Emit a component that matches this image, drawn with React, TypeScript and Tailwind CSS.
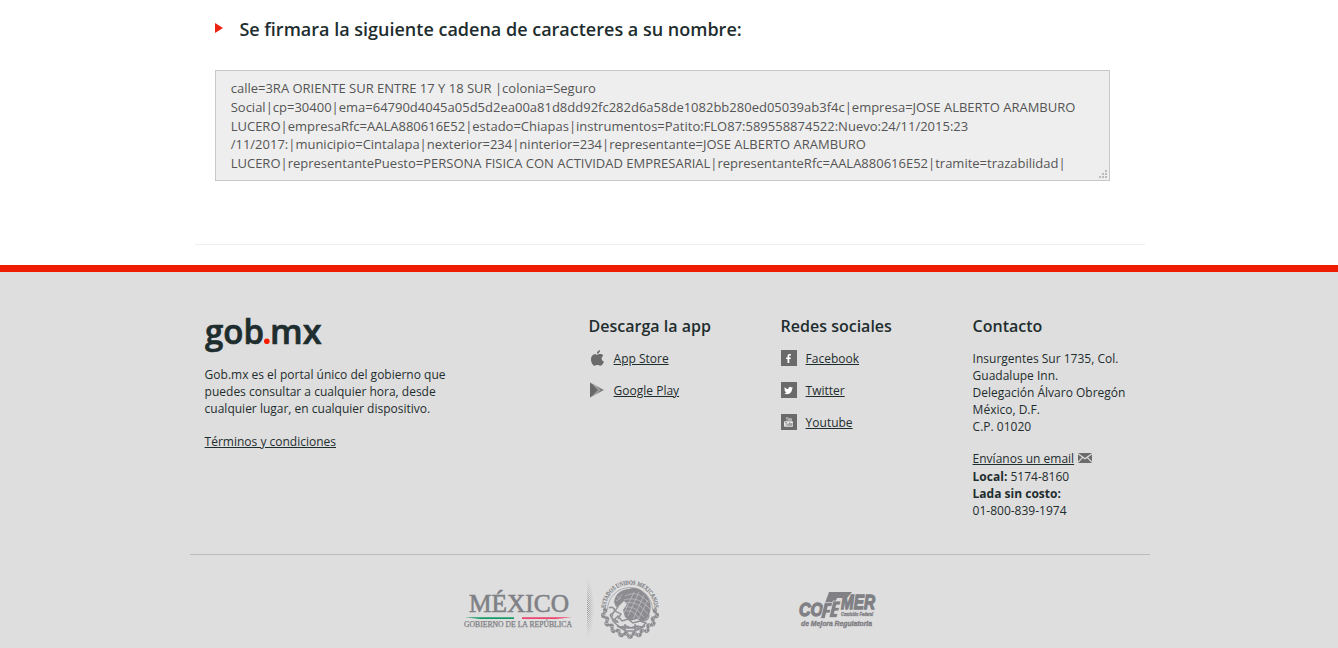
import React from "react";
import { FaFacebookF, FaTwitter } from "react-icons/fa";

const cadena = [
  "calle=3RA ORIENTE SUR ENTRE 17 Y 18 SUR |colonia=Seguro",
  "Social|cp=30400|ema=64790d4045a05d5d2ea00a81d8dd92fc282d6a58de1082bb280ed05039ab3f4c|empresa=JOSE ALBERTO ARAMBURO",
  "LUCERO|empresaRfc=AALA880616E52|estado=Chiapas|instrumentos=Patito:FLO87:589558874522:Nuevo:24/11/2015:23",
  "/11/2017:|municipio=Cintalapa|nexterior=234|ninterior=234|representante=JOSE ALBERTO ARAMBURO",
  "LUCERO|representantePuesto=PERSONA FISICA CON ACTIVIDAD EMPRESARIAL|representanteRfc=AALA880616E52|tramite=trazabilidad|",
];

function GobLogo() {
  return (
    <svg className="block h-[40px] w-[120px] overflow-visible" viewBox="0 0 120 40" aria-label="gob.mx">
      <g className="font-['Open_Sans',sans-serif] font-semibold" fill="#1e2d2e" stroke="#1e2d2e" strokeWidth=".7">
        <text x="0" y="26.500" fontSize="34" textLength="59" lengthAdjust="spacingAndGlyphs">gob</text>
        <text x="65" y="26.500" fontSize="34" textLength="51.500" lengthAdjust="spacingAndGlyphs">mx</text>
      </g>
      <circle cx="61.800" cy="24.200" r="2.800" fill="#f91d00" />
    </svg>
  );
}

function AppleIcon() {
  return (
    <svg className="block h-4 w-4" viewBox="0 0 16 16" fill="#6a6a6a">
      <path d="M11 0c.2 2-1.400 3.700-3.100 3.700C7.700 2 9.300.3 11 0z" />
      <path d="M8.200 4.800c.8 0 1.800-.8 3.300-.7 1.200 0 2.300.6 2.900 1.500-2.600 1.700-2.100 5 .5 6.100-.7 1.800-2.100 4-3.700 4-1 0-1.500-.6-2.800-.6s-1.700.6-2.700.6C3.900 15.700 2 12.400 2 9.400c0-3.400 2.200-5.200 4.100-5.200.9 0 1.600.6 2.100.6z" />
    </svg>
  );
}

function PlayIcon() {
  return (
    <svg className="block h-4 w-4" viewBox="0 0 16 16">
      <path d="M1 .5v15L15 8z" fill="#808080" />
      <path d="M1 .5v15l7-7.500z" fill="#686868" />
      <path d="m5.500 3 5 5-5 5" fill="none" stroke="#c5c5c5" strokeWidth=".9" />
    </svg>
  );
}

function YoutubeIcon() {
  return (
    <svg className="h-[10px] w-[9px]" viewBox="0 0 9 10">
      <path d="m2 0 1 2v2M4 0 3 2M4.500 1.500h1v2h-1zM6.500 1.300v2.200h1V1.300" fill="none" stroke="#e5e5e5" strokeWidth=".6" />
      <rect y="4.300" width="9" height="5.500" rx="1" fill="#e8e8e8" />
      <path d="M1 5.500h2M2 5.500v3.300M3.500 6.500v2h1v-2M5.500 5.200v3.300h1v-2h-1M8.300 7.500h-1v-1h1zM7.300 7.500v1h1" fill="none" stroke="#6a6a6a" strokeWidth=".55" />
    </svg>
  );
}

function MailIcon() {
  return (
    <svg className="ml-1 mb-[2px] h-[10px] w-[14px]" viewBox="0 0 14 10">
      <rect width="14" height="10" rx=".5" fill="#6c6c6c" />
      <path d="m0 .8 7 5 7-5M0 9.300l4.700-5M14 9.300l-4.700-5" fill="none" stroke="#dedede" strokeWidth="1.200" />
    </svg>
  );
}

function MexicoLogo() {
  return (
    <svg className="block h-[44px] w-[110px]" viewBox="0 0 110 44">
      <g className="font-['Liberation_Serif',serif]" fill="#808186" stroke="#808186">
        <text x="6" y="26" fontSize="25" textLength="100" lengthAdjust="spacingAndGlyphs" strokeWidth=".6">MÉXICO</text>
        <text x="1" y="41" fontSize="7.600" textLength="108" lengthAdjust="spacingAndGlyphs" strokeWidth=".25">GOBIERNO DE LA REPÚBLICA</text>
      </g>
      <path d="M2 31.200h49V33H17z" fill="#169b68" />
      <path d="M59 31.200h50L93 33H59z" fill="#ef4370" />
    </svg>
  );
}

const leaves = Array.from({ length: 19 }, (_, i) => 4 + (i * 172) / 18);

function Seal() {
  return (
    <svg className="block h-[62px] w-[76px] overflow-visible" viewBox="0 0 76 62">
      <defs>
        <pattern id="dots" width="2" height="2" patternUnits="userSpaceOnUse">
          <path d="M0 0h1v1H0zM1 1h1v1H1z" fill="#949494" />
        </pattern>
        <radialGradient id="fade" cx="0" cy=".5" r="1" gradientTransform="translate(0 .25) scale(1 .5)">
          <stop stopColor="#fff" />
          <stop offset="1" stopColor="#fff" stopOpacity="0" />
        </radialGradient>
        <mask id="edge"><rect width="7" height="60" fill="url(#fade)" /></mask>
        <path id="ring" d="M18.600 31A24.400 24.400 0 0 1 67.400 31" />
      </defs>
      <rect width="7" height="60" fill="url(#dots)" mask="url(#edge)" />
      <text className="font-['Liberation_Serif',serif] font-bold" fontSize="6.300" fill="#808085" stroke="#808085" strokeWidth=".15">
        <textPath href="#ring" startOffset="1" textLength="74" lengthAdjust="spacingAndGlyphs">ESTADOS UNIDOS MEXICANOS</textPath>
      </text>
      <path d="M20.500 32a22.500 22.500 0 0 1 45 0" fill="none" stroke="#98989c" strokeWidth=".7" />
      <g fill="#8b8b90">
        {leaves.map((a, i) => (
          <g key={a} transform={`rotate(${a} 43 31)`}>
            <ellipse cx={i % 2 ? 70.500 : 68} cy="31" rx="2.200" ry="2.800" />
            <path d="m66 28.500 6 4" stroke="#dedede" strokeWidth=".5" />
          </g>
        ))}
      </g>
      <path d="M27 24c1-8 8-13 15-13 4-2 10-1 14 3 7 5 9 13 7 20-1 5-4 8-8 10l-5-3-7 2-5-4-2-7 4-6-3-3-4 4-4 2z" fill="#8c8c91" />
      <g fill="none" stroke="#c8c8ca" strokeWidth=".65">
        <path d="M38 18c8-4 15-3 24 7M37 22c10-3 18 0 26 9M38 25c9-2 16 2 23 11M38 29c8-1 13 3 19 10M39 33c6-1 10 3 13 8M47 14 37 35M52 14 41 38M57 17 46 41M61 22 51 42" />
        <path d="M30 19c4 1 4-1 5-3M29 23l5-3" />
      </g>
      <path d="M22 30c3-2 7 1 5 4s-5 1-3 5 7 2 7 6M26 43l5-5 4 5 6-2 5 4 7-2 6 2-4 4-6-1-5 2-5-2-6 1-4-3zM34 50h18M38 46v7h10v-7M30 48l9 5h9l10-5" fill="none" stroke="#8d8d92" strokeWidth="1.400" />
      <path d="M26 36c-3 4 0 8 4 8M32 27l-4 6 6 3-3 5M57 43c4-1 5-4 5-6" fill="none" stroke="#98989c" strokeWidth="1.500" />
    </svg>
  );
}

function CofemerLogo() {
  return (
    <svg className="block h-[38px] w-[80px] overflow-visible" viewBox="0 0 80 38">
      <path d="M31 3h23l-5 6H39l-2 5H27z" fill="#808085" />
      <g className="font-['Liberation_Sans',sans-serif] font-bold italic" fill="#808085" stroke="#808085">
        <text x="1" y="27" fontSize="19" textLength="24" lengthAdjust="spacingAndGlyphs" strokeWidth="1.300">CO</text>
        <path d="M26.500 13.500H35l-1 4h-4l-.8 3h3.800l-1 3.500h-3.700L27 29.500h-4.500z" stroke="#dedede" strokeWidth=".7" />
        <path d="M35 12h8l-1 4h-3.500l-.7 2.500h3.700l-1 3.500h-3.600l-.7 2.500h3.600l-1 4H31z" stroke="#dedede" strokeWidth=".7" />
        <text x="43" y="19.500" fontSize="20" textLength="34" lengthAdjust="spacingAndGlyphs" strokeWidth="1.300">MER</text>
        <text x="43" y="27" fontSize="4.600" textLength="32" lengthAdjust="spacingAndGlyphs" strokeWidth=".3">Comisión Federal</text>
        <text x="3" y="36.500" fontSize="7.700" textLength="71" lengthAdjust="spacingAndGlyphs" strokeWidth=".4">de Mejora Regulatoria</text>
      </g>
    </svg>
  );
}

function FooterLink({ icon, children }: { icon: React.ReactNode; children: React.ReactNode }) {
  return (
    <li className="flex h-4 items-center gap-[9px]">
      {icon}
      <a href="#" className="underline">{children}</a>
    </li>
  );
}

function Social({ children }: { children: React.ReactNode }) {
  return <span className="flex h-4 w-4 items-center justify-center bg-[#6a6a6a] text-white">{children}</span>;
}

export default function App() {
  return (
    <div className="flex h-[648px] flex-col overflow-hidden bg-white font-['Open_Sans',sans-serif] text-[#1e2d2e]">
      <main className="mx-auto h-[265px] w-[948px] shrink-0 pl-5">
        <h1 className="flex h-[70px] items-start pt-[17px] text-[18px] font-semibold leading-[25px]">
          <svg className="mt-[6px] mr-[16.400px] h-[10px] w-[8px]" viewBox="0 0 8 10"><path d="M0 0v10l8-5z" fill="#ee2211" /></svg>
          <span>Se firmara la siguiente cadena de caracteres a su nombre:</span>
        </h1>
        <div className="relative h-[111px] w-[895px] border border-[#c8c8c8] bg-[#eee] pt-[8.300px] pl-[14.700px] text-[13px] leading-[18.650px] text-[#555]">
          {cadena.map((line) => <div key={line} className="whitespace-pre">{line}</div>)}
          <svg className="absolute right-[2px] bottom-[2px] h-2 w-2" viewBox="0 0 8 8">
            <path d="M6 0h2v2H6zM3 3h2v2H3zM6 3h2v2H6zM0 6h2v2H0zM3 6h2v2H3zM6 6h2v2H6z" fill="#bbb" />
          </svg>
        </div>
        <hr className="mt-[63px] -ml-5 w-[950px] border-[#eee]" />
      </main>
      <footer className="grow border-t-[7px] border-[#ee1c00] bg-[#dedede] pl-[2px] text-[12px] leading-[17px]">
        <div className="mx-auto flex h-[283px] w-[960px] border-b border-[#bbb] pt-[45px] pl-[14.600px]">
          <section className="w-[384px]">
            <GobLogo />
            <p className="mt-[9px] w-[250px]">Gob.mx es el portal único del gobierno que puedes consultar a cualquier hora, desde cualquier lugar, en cualquier dispositivo.</p>
            <a href="#" className="mt-4 block underline">Términos y condiciones</a>
          </section>
          <section className="w-[192px]">
            <h2 className="text-base font-semibold leading-[18px]">Descarga la app</h2>
            <ul className="mt-[15px] flex flex-col gap-4">
              <FooterLink icon={<AppleIcon />}>App Store</FooterLink>
              <FooterLink icon={<PlayIcon />}>Google Play</FooterLink>
            </ul>
          </section>
          <section className="w-[192px]">
            <h2 className="text-base font-semibold leading-[18px]">Redes sociales</h2>
            <ul className="mt-[15px] flex flex-col gap-4">
              <FooterLink icon={<Social><FaFacebookF className="h-[9px] w-[9px]" /></Social>}>Facebook</FooterLink>
              <FooterLink icon={<Social><FaTwitter className="h-[9px] w-[9px]" /></Social>}>Twitter</FooterLink>
              <FooterLink icon={<Social><YoutubeIcon /></Social>}>Youtube</FooterLink>
            </ul>
          </section>
          <section className="w-[170px]">
            <h2 className="text-base font-semibold leading-[18px]">Contacto</h2>
            <address className="mt-[15px] not-italic">Insurgentes Sur 1735, Col.<br />Guadalupe Inn.<br />Delegación Álvaro Obregón<br />México, D.F.<br />C.P. 01020</address>
            <div className="mt-[15px] mb-px flex h-[17px] items-center"><a href="#" className="underline">Envíanos un email</a><MailIcon /></div>
            <p><b>Local:</b> 5174-8160<br /><b>Lada sin costo:</b><br />01-800-839-1974</p>
          </section>
        </div>
        <div className="mx-auto flex w-[960px] pt-[23px] pl-[273px]">
          <div className="mt-2"><MexicoLogo /></div>
          <div className="ml-[14px]"><Seal /></div>
          <div className="mt-[11px] ml-[135px]"><CofemerLogo /></div>
        </div>
      </footer>
    </div>
  );
}
